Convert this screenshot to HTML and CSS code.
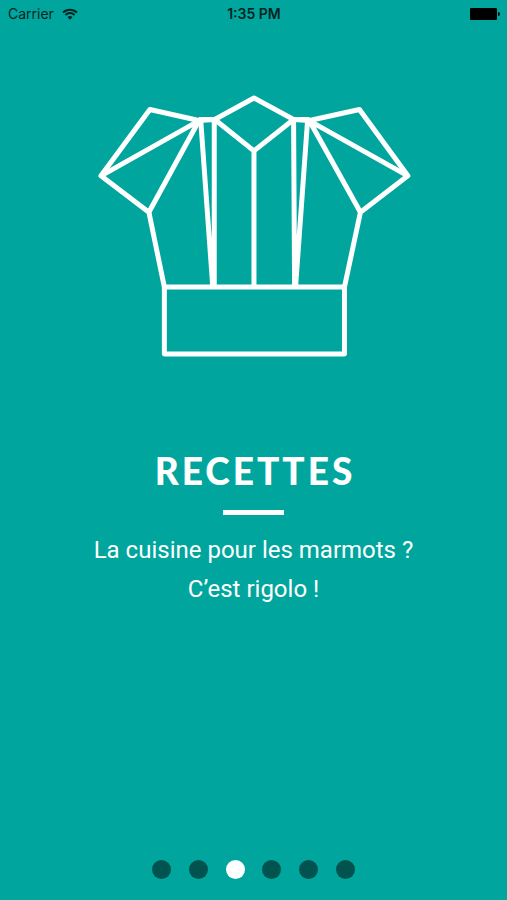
FILE: index.html
```html
<!DOCTYPE html>
<html lang="fr">
<head>
<meta charset="utf-8">
<meta name="viewport" content="width=device-width, initial-scale=1">
<title>Recettes</title>
<link rel="stylesheet" href="styles.css">
</head>
<body>
<header class="status">
  <div class="carrier">
    <span>Carrier</span>
    <svg class="wifi" viewBox="0 0 16 12" aria-hidden="true">
      <path d="M1 4.500a10 10 0 0 1 14 0M3.400 7a6.500 6.500 0 0 1 9.200 0" fill="none" stroke="currentColor" stroke-width="2"/>
      <path d="M5.500 9.100a3.600 3.600 0 0 1 5 0L8 11.800z" fill="currentColor"/>
    </svg>
  </div>
  <time class="clock">1:35 PM</time>
  <svg class="battery" viewBox="0 0 30 12" aria-hidden="true">
    <rect width="27" height="12" rx="1"/>
    <path d="M28 4q2 0 2 2t-2 2z"/>
  </svg>
</header>
<main class="slide">
  <svg class="hat" viewBox="96 95 315 263" aria-hidden="true">
    <path d="M164.500 287.500H345V354.500H164.500zL149 212.500 101 176 150 109.500 199 120.500 215 119.500 254.300 98 294 119.500 310 120.500 360 109.500 408.500 176 361 212.500 345 287.500"/>
    <path d="M101 176 199 121 149 212.500M408.500 176 310 121 361 212.500"/>
    <path d="M199 119.500H215L254.300 151 294 119.500H310M254.300 151V287.500"/>
    <path d="M201 121 213 287M214.500 120V287M308 121 296 287M294 120 295 287"/>
  </svg>
  <h1 class="title">RECETTES</h1>
  <hr class="rule">
  <p class="text">La cuisine pour les marmots ?<br>C’est rigolo !</p>
</main>
<nav class="dots" aria-label="Pages">
  <button class="dot" aria-label="Page 1"></button>
  <button class="dot" aria-label="Page 2"></button>
  <button class="dot current" aria-label="Page 3" aria-current="page"></button>
  <button class="dot" aria-label="Page 4"></button>
  <button class="dot" aria-label="Page 5"></button>
  <button class="dot" aria-label="Page 6"></button>
</nav>
</body>
</html>
```
FILE: styles.css
```css
* {
  box-sizing: border-box;
}

body {
  display: flex;
  flex-direction: column;
  min-height: 100vh;
  margin: 0;
  background: #00a69d;
  color: #fff;
  font-family: Roboto, sans-serif;
}

.status {
  display: grid;
  grid-template-columns: 1fr auto 1fr;
  align-items: center;
  height: 27px;
  padding: 0 7px 0 8px;
  color: #002421;
  font: 14px/20px Inter, sans-serif;
}

.carrier {
  display: flex;
  align-items: center;
  gap: 8px;
}

.wifi {
  width: 16px;
  height: 12px;
}

.clock {
  font-weight: 600;
}

.battery {
  justify-self: end;
  width: 30px;
  height: 12px;
  fill: #000;
}

.slide {
  display: flex;
  flex: 1;
  flex-direction: column;
  align-items: center;
  padding-top: 68px;
}

.hat {
  width: 62%;
  fill: none;
  stroke: #fff;
  stroke-width: 5;
  stroke-linejoin: round;
}

.title {
  margin: 90px 0 15px;
  padding-left: 3px;
  font: 900 37px/48px Lato, sans-serif;
  letter-spacing: 3px;
}

.rule {
  width: 61px;
  height: 5px;
  margin: 0 0 16px;
  border: 0;
  background: #fff;
}

.text {
  margin: 0;
  font-size: 24px;
  line-height: 39px;
  text-align: center;
}

.dots {
  display: flex;
  justify-content: space-between;
  width: 40%;
  margin: 0 auto 21px;
}

.dot {
  width: 19px;
  height: 19px;
  padding: 0;
  border: 0;
  border-radius: 50%;
  background: #00534f;
}

.current {
  background: #fff;
}
```
